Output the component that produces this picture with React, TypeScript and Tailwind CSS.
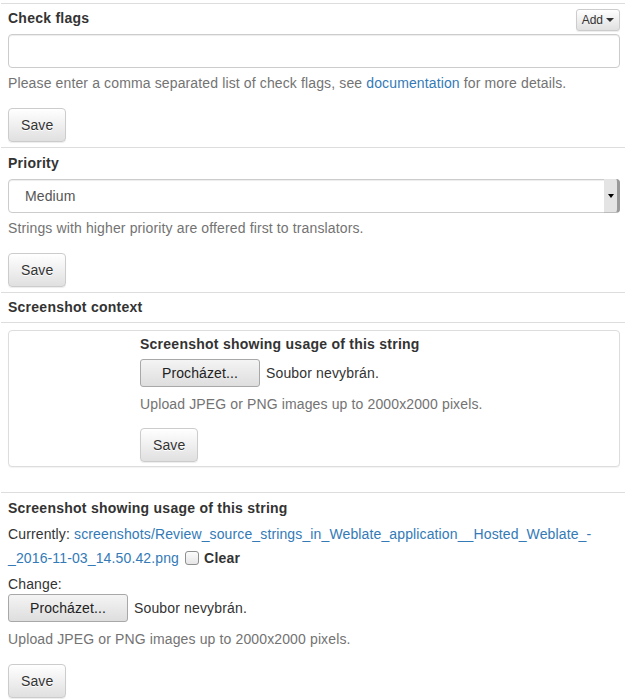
import React from 'react';

const font = { fontFamily: '"Liberation Sans", Arial, sans-serif' };

// bootstrap-theme style default button
const SaveButton = () => (
  <button
    type="button"
    className="h-[34px] px-[12px] rounded-[4px] border border-[#ccc] bg-gradient-to-b from-white to-[#e0e0e0] text-[14px] leading-[20px] text-[#333] tracking-[0.12px] shadow-[inset_0_1px_0_rgba(255,255,255,0.15),0_1px_1px_rgba(0,0,0,0.075)] [text-shadow:0_1px_0_#fff]"
  >
    Save
  </button>
);

const FileInput = () => (
  <div className="flex items-center gap-[6px]">
    <button
      type="button"
      className="w-[120px] h-[28px] rounded-[3px] border border-[#a8a8a8] bg-gradient-to-b from-[#f4f4f4] to-[#dedede] text-[14px] leading-[20px] text-[#222] tracking-[0.12px]"
    >
      Procházet...
    </button>
    <span className="text-[14px] leading-[20px] text-[#333] tracking-[0.15px]">Soubor nevybrán.</span>
  </div>
);

const Help = ({ children, className = '' }: { children: React.ReactNode; className?: string }) => (
  <p className={`text-[14px] leading-[20px] text-[#737373] tracking-[0.13px] ${className}`}>{children}</p>
);

const Heading = ({ children, className = '' }: { children: React.ReactNode; className?: string }) => (
  <h3 className={`text-[14px] leading-[20px] font-bold tracking-[0.25px] ${className}`}>{children}</h3>
);

const App = () => {
  return (
    <div className="w-[632px] h-[699px] bg-white overflow-hidden text-[#333]" style={font}>
      <div className="ml-[1px] w-[624px] pt-[3px]">
        {/* Check flags */}
        <div className="border-t border-[#ddd] pl-[7px] pr-[5px] pt-[4px] pb-[5px]">
          <div className="flex justify-between items-start h-[20px] mb-[6px]">
            <Heading>Check flags</Heading>
            <button
              type="button"
              className="mt-[1px] h-[22px] px-[5px] rounded-[3px] border border-[#ccc] bg-gradient-to-b from-white to-[#e0e0e0] text-[12px] leading-[18px] text-[#333] flex items-center shadow-[0_1px_1px_rgba(0,0,0,0.075)]"
            >
              Add
              <span className="ml-[3px] w-0 h-0 border-t-[4px] border-t-[#333] border-x-[4px] border-x-transparent" />
            </button>
          </div>
          <div className="h-[34px] rounded-[4px] border border-[#ccc] bg-white shadow-[inset_0_1px_1px_rgba(0,0,0,0.075)]" />
          <Help className="mt-[5px] mb-[15px]">
            Please enter a comma separated list of check flags, see{' '}
            <a className="text-[#337ab7]">documentation</a> for more details.
          </Help>
          <SaveButton />
        </div>

        {/* Priority */}
        <div className="border-t border-[#ddd] pl-[7px] pr-[5px] pt-[5px] pb-[5px]">
          <Heading className="mb-[6px]">Priority</Heading>
          <div className="h-[34px] rounded-[4px] border border-[#ccc] bg-white shadow-[inset_0_1px_1px_rgba(0,0,0,0.075)] flex items-stretch">
            <span className="flex-1 pl-[16px] text-[14px] leading-[32px] text-[#555] tracking-[0.12px]">Medium</span>
            <span className="w-[16px] -my-px -mr-px rounded-r-[4px] bg-[#e4e4e4] border-r-[3px] border-r-[#9a9a9a] border-b border-b-[#bbb] flex items-center justify-center">
              <span className="w-0 h-0 border-t-[4px] border-t-black border-x-[3px] border-x-transparent" />
            </span>
          </div>
          <Help className="mt-[5px] mb-[15px]">Strings with higher priority are offered first to translators.</Help>
          <SaveButton />
        </div>

        {/* Screenshot context */}
        <div className="border-t border-[#ddd] pl-[7px] pr-[5px] pt-[4px] pb-[5px]">
          <Heading>Screenshot context</Heading>
        </div>
        <div className="border-t border-[#ddd] pl-[7px] pr-[5px] pt-[7px] pb-[25px]">
          <div className="rounded-[4px] border border-[#ddd] bg-white shadow-[0_1px_1px_rgba(0,0,0,0.05)] pl-[131px] pt-[3px] pb-[4px]">
            <Heading className="mb-[5px]">Screenshot showing usage of this string</Heading>
            <FileInput />
            <Help className="mt-[7px] mb-[14px]">Upload JPEG or PNG images up to 2000x2000 pixels.</Help>
            <SaveButton />
          </div>
        </div>

        {/* Screenshot upload */}
        <div className="border-t border-[#ddd] pl-[7px] pr-[5px] pt-[5px]">
          <Heading>Screenshot showing usage of this string</Heading>
          <p className="mt-[4px] text-[14px] leading-[24px] tracking-[0.13px]">
            Currently:{' '}
            <a className="text-[#337ab7]">screenshots/Review_source_strings_in_Weblate_application__Hosted_Weblate_-</a>
            <br />
            <a className="text-[#337ab7]">_2016-11-03_14.50.42.png</a>
            <span className="inline-block align-[-2px] ml-[6px] mr-[5px] w-[14px] h-[14px] rounded-[3px] border border-[#8f8f8f] bg-gradient-to-b from-[#fcfcfc] to-[#e6e6e6]" />
            <b className="tracking-[0.25px]">Clear</b>
          </p>
          <p className="mt-[4px] text-[14px] leading-[20px] tracking-[0.13px]">Change:</p>
          <FileInput />
          <Help className="mt-[7px] mb-[15px]">Upload JPEG or PNG images up to 2000x2000 pixels.</Help>
          <SaveButton />
        </div>
      </div>
    </div>
  );
};

export default App;
